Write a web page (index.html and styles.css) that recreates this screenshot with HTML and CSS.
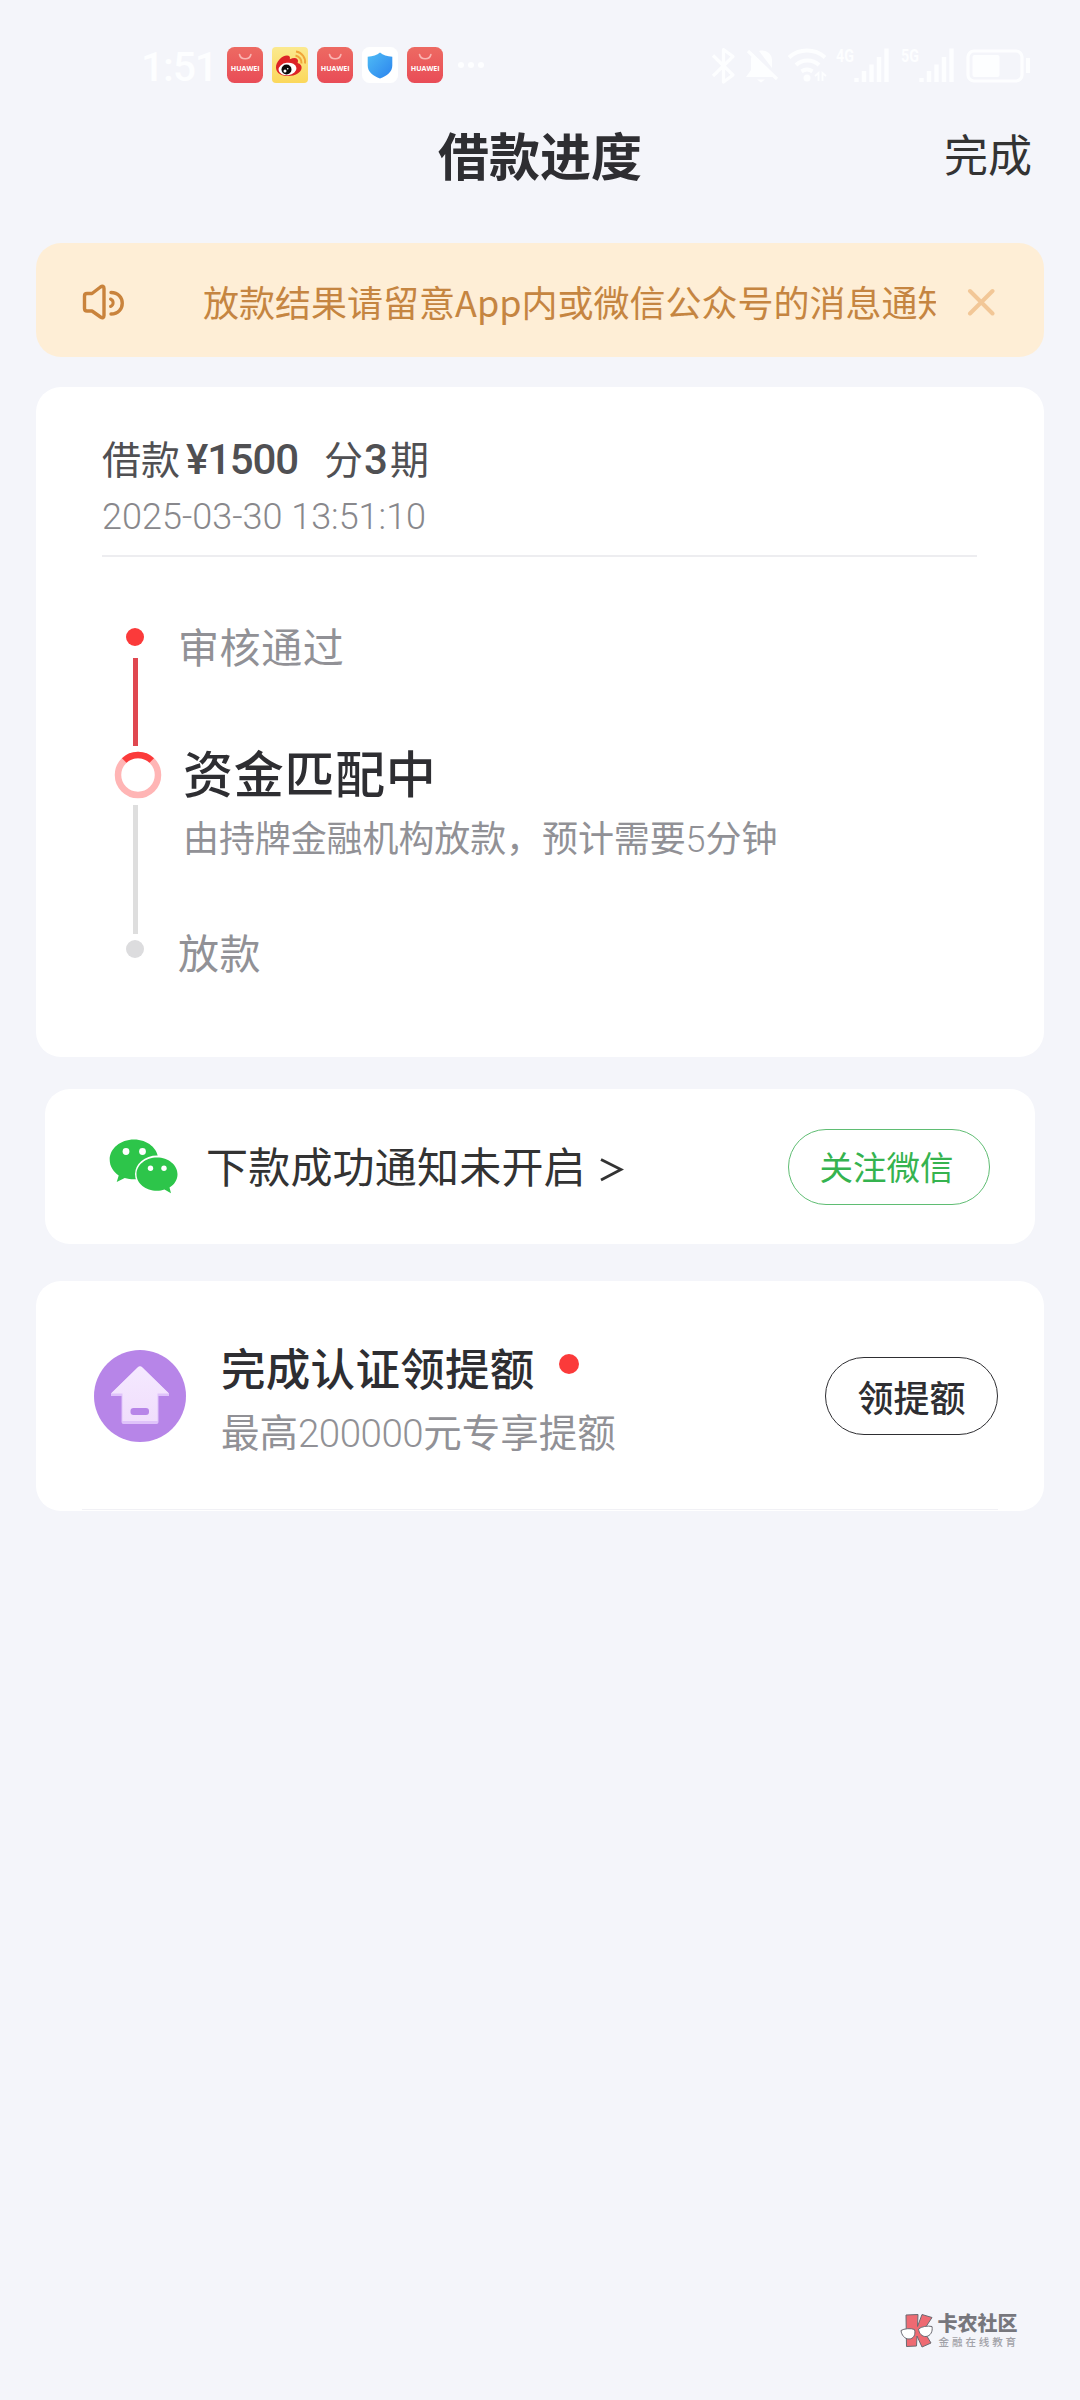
FILE: index.html
```
<!DOCTYPE html>
<html lang="zh-CN">
<head>
<meta charset="utf-8">
<title>借款进度</title>
<link rel="stylesheet" href="styles.css">
</head>
<body>
<svg class="defs" width="0" height="0">
  <defs>
    <linearGradient id="gRed" x1="0" y1="0" x2="0" y2="1"><stop offset="0" stop-color="#ed6a62"/><stop offset="1" stop-color="#e94c57"/></linearGradient>
    <linearGradient id="gShield" x1="0" y1="0" x2="1" y2="1"><stop offset="0" stop-color="#4fbcf5"/><stop offset="1" stop-color="#2b83ee"/></linearGradient>
    <linearGradient id="gYellow" x1="0" y1="0" x2="0" y2="1"><stop offset="0" stop-color="#fbe98f"/><stop offset="1" stop-color="#fbd75b"/></linearGradient>
    <linearGradient id="gHouse" x1="0" y1="0" x2="0" y2="1"><stop offset="0" stop-color="#f5e9ff"/><stop offset="1" stop-color="#f0defc"/></linearGradient>
    <symbol id="huawei" viewBox="0 0 36 36">
      <rect width="36" height="36" rx="7.5" fill="url(#gRed)"/>
      <path d="M12.5 7.5a5.8 5.2 0 0 0 11.4 0" fill="none" stroke="#f9b5b1" stroke-width="1.6" stroke-linecap="round"/>
      <text x="18.2" y="23.6" text-anchor="middle" textLength="29" lengthAdjust="spacingAndGlyphs" class="huawei-word">HUAWEI</text>
    </symbol>
  </defs>
</svg>
<div class="screen">
  <div class="status">
    <span class="clock">1:51</span>
    <div class="notes">
      <svg width="36" height="36"><use href="#huawei"/></svg>
      <svg width="36" height="36" viewBox="0 0 36 36">
        <rect width="36" height="36" rx="4" fill="url(#gYellow)"/>
        <path d="M24 8.500a8 7.500 0 0 1 6 8M24.500 4.500a11 10.500 0 0 1 9 12" transform="translate(-.5 0)" fill="none" stroke="#f0a53a" stroke-width="2"/>
        <path d="M4 21C3.500 15 10 8.500 15 8.500c2.500 0 3.500 1.500 2.800 3.700 3.500-1.500 6.200-1.500 7.400-.2 1.300 1.200.8 3 .4 4 3 1 4.200 2.600 4 5-.4 4.600-6.600 8-13.300 8S4.500 26.500 4 21z" fill="#dd2327"/>
        <ellipse cx="15.500" cy="22" rx="9" ry="6.200" fill="#fff" transform="rotate(-7 15.500 22)"/>
        <circle cx="14.500" cy="22.500" r="5" fill="#0b0b0b"/><circle cx="13" cy="24" r="1.500" fill="#fff"/><circle cx="15.700" cy="21.800" r=".8" fill="#fff"/>
      </svg>
      <svg width="36" height="36"><use href="#huawei"/></svg>
      <svg width="36" height="36" viewBox="0 0 36 36">
        <rect width="36" height="36" rx="7.500" fill="#fff"/>
        <path d="M18 5.500c3 2.500 7 4 12.300 4.300v8.700c0 6.500-5.500 10.500-12.300 13-6.800-2.500-12.300-6.500-12.300-13V9.800C11 9.500 15 8 18 5.500z" fill="url(#gShield)"/>
      </svg>
      <svg width="36" height="36"><use href="#huawei"/></svg>
    </div>
    <div class="more"><i></i><i></i><i></i></div>
    <svg class="system" width="324" height="40" viewBox="708 46 324 40" fill="none" stroke="#fdfeff" stroke-width="3.200">
      <path d="M713 55.500l20 19.500-9.500 7V49.500l9.500 7-20 19.500" stroke-linejoin="round"/>
      <path d="M751 58v12l-5 7h28L753 54zM759 51l13 17V60c0-6-6-11-13-9z" fill="#fdfeff" stroke="none"/>
      <path d="M748 51l29 28"/><path d="M757 79.500h8l-4 3z" fill="#fdfeff" stroke="none"/>
      <path d="M789 57.500a27 27 0 0 1 36 0M796 65a17 17 0 0 1 23 0M801.500 71.500a9.500 9.500 0 0 1 11 0" stroke-width="4"/>
      <circle cx="807" cy="78" r="3.500" fill="#fdfeff" stroke="none"/>
      <path d="M815 76l3.500-3v8M826 76l-3.500-3v8" stroke-width="1.800"/>
      <path d="M856.500 82v-4M864 82v-11M871.500 82V64.500M879 82V57M886.500 82V48.500M921.500 82v-4M929 82v-11M936.500 82V64.500M944 82V57M951.500 82V48.500" stroke-width="4.400"/>
      <text x="836" y="62" textLength="18" lengthAdjust="spacingAndGlyphs" class="net">4G</text>
      <text x="901" y="62" textLength="18" lengthAdjust="spacingAndGlyphs" class="net">5G</text>
      <rect x="968" y="51" width="54" height="30" rx="6"/>
      <rect x="972.500" y="55" width="27" height="22" rx="2" fill="#fdfeff" stroke="none"/>
      <path d="M1028 58v15" stroke-width="4"/>
    </svg>
  </div>

  <header class="nav">
    <h1 class="nav-title">借款进度</h1>
    <a class="nav-done">完成</a>
  </header>

  <section class="notice">
    <svg class="speaker" width="46" height="40" viewBox="80 283 46 40" fill="none" stroke="#c9833c" stroke-width="3.400" stroke-linecap="round" stroke-linejoin="round">
      <path d="M86 294.500h5l8.500-6.500c2-1.300 3.500-.7 3.500 1.500v27c0 2.200-1.500 2.800-3.500 1.500L91 312h-5c-1.800 0-2.500-.8-2.500-2.500v-12.500c0-1.700.7-2.500 2.500-2.500z"/>
      <path d="M110 293.500c15 0 15 21.500 0 21.500"/><path d="M109.500 300c3.500 1.500 3.500 6 0 7.500" stroke-width="3"/>
    </svg>
    <p class="notice-text">放款结果请留意App内或微信公众号的消息通知</p>
    <svg class="close" width="28" height="28" viewBox="0 0 28 28" stroke="#f2c797" stroke-width="4" stroke-linecap="round"><path d="M3 3l22.500 22.500M25.500 3L3 25.500"/></svg>
  </section>

  <section class="card loan">
    <div class="loan-head">
      <p class="amount"><span>借款</span><b class="yen">¥1500</b><span>分</span><b class="terms">3</b><span>期</span></p>
      <p class="date">2025-03-30 13:51:10</p>
    </div>
    <div class="steps">
      <div class="rail">
        <i class="dot"></i><i class="line line-done"></i>
        <svg class="ring" width="48" height="48" viewBox="-24 -24 48 48" fill="none" stroke-width="6.500">
          <circle r="20" stroke="#ffb5b5"/><path d="M-13.800 -14.500A20 20 0 0 1 13.800 -14.500" stroke="#fb3a3a"/>
        </svg>
        <i class="line line-wait"></i><i class="dot dot-wait"></i>
      </div>
      <div class="step-texts">
        <p class="step">审核通过</p>
        <p class="step-now">资金匹配中</p>
        <p class="step-sub">由持牌金融机构放款，预计需要<span class="num">5</span>分钟</p>
        <p class="step step-last">放款</p>
      </div>
    </div>
  </section>

  <section class="card wechat">
    <svg width="69" height="57" viewBox="109 1138 69 57">
      <path d="M134 1139.500c-13.500 0-24.300 9-24.300 20.300 0 6.400 3.500 12 9 15.700l-2 6.500 8-4c3 .9 6 1.300 9.300 1.300 13.400 0 24.300-8.800 24.300-19.500 0-11.300-10.900-20.300-24.300-20.300z" fill="#2dc54a"/>
      <ellipse cx="157" cy="1174" rx="22" ry="18.500" fill="#fff"/>
      <path d="M157 1157.500c-11.300 0-20.500 7.500-20.500 16.700s9.200 16.600 20.500 16.600c2.800 0 5-.3 7.500-1.200l6.500 3.600-1.500-5.700c5-3.200 8-7.800 8-13.300 0-9.200-9.200-16.700-20.500-16.700z" fill="#2dc54a"/>
      <g fill="#fff"><circle cx="126" cy="1151.500" r="3.400"/><circle cx="142.500" cy="1151.500" r="3.400"/><circle cx="150.500" cy="1168.300" r="2.700"/><circle cx="164" cy="1168.300" r="2.700"/></g>
    </svg>
    <p class="wechat-text">下款成功通知未开启</p>
    <svg class="arrow" width="24" height="26" viewBox="0 0 24 26" fill="none" stroke="#333" stroke-width="2.800"><path d="M1 2.500L21 12.500 1 23"/></svg>
    <button class="pill pill-green">关注微信</button>
  </section>

  <section class="card quota">
    <div class="quota-row">
      <svg width="92" height="92" viewBox="0 0 92 92">
        <circle cx="46" cy="46" r="46" fill="#b785e8"/>
        <path d="M43.500 18q2.500-2.500 5 0L75 43.500V46H64.500v26q0 2-2 2h-33q-2 0-2-2V46H17V43.500z" fill="#dfc3fa"/>
        <path d="M43.500 17.500q2.500-2.500 5 0L75 43.500H63.500V71h-35V43.500H17z" fill="url(#gHouse)"/>
        <rect x="36.500" y="58" width="18.500" height="7" rx="3" fill="#b785e8"/>
      </svg>
      <div class="quota-main">
        <p class="quota-title">完成认证领提额<i class="badge"></i></p>
        <p class="quota-sub">最高<span class="num">200000</span>元专享提额</p>
      </div>
      <button class="pill pill-dark">领提额</button>
    </div>
  </section>

  <footer class="brand">
    <svg width="34" height="36" viewBox="0 0 34 36" stroke="#6a6a72" stroke-width="1">
      <path d="M6 2l12-.5-.5 12L22 1.500l10 3-8.500 13L31 30l-9 4-5-11-.5 10-10 .5z" fill="#ee6a72"/>
      <path d="M1 17.500c3-2 10-2.500 13.500-1 1.500 5-1 9.500-5.500 9.500s-7.500-4-8-8.500zM18.500 16c3-2.500 9-3.500 13.500-2.500 1 5-1.500 9.500-6 10-4 .3-7-3-7.500-7.500z" fill="#fff"/>
    </svg>
    <div>
      <p class="brand-name">卡农社区</p>
      <p class="brand-sub">金融在线教育</p>
    </div>
  </footer>
</div>
</body>
</html>
```
FILE: styles.css
```
* { box-sizing: border-box; }
body { margin: 0; background: #f4f5fa; font-family: "Noto Sans CJK SC", sans-serif; color: #2e2e32; }
p, h1 { margin: 0; font-weight: 400; white-space: nowrap; }
svg { display: block; flex: none; }
i { display: block; flex: none; }
.defs { position: absolute; }
.screen { width: 1080px; height: 2400px; display: flex; flex-direction: column; overflow: hidden; }

.status { height: 106px; padding: 24px 48px 0 141px; display: flex; align-items: center; flex: none; }
.clock { width: 86px; font: 500 41px/42px Roboto, sans-serif; letter-spacing: -1.200px; color: #fdfeff; margin-top: 4px; }
.notes { display: flex; gap: 9px; }
.more { display: flex; gap: 4px; margin-left: 15px; }
.more i { width: 6px; height: 6px; border-radius: 3px; background: #fdfeff; }
.system { margin: 2px 0 0 auto; }
.huawei-word { font: 700 6.500px "Open Sans", sans-serif; fill: #fff; }
.net { font: 700 18px Roboto, sans-serif; fill: #fdfeff; stroke: none; }

.nav { height: 137px; padding: 20px 48px 0 436px; display: flex; justify-content: space-between; align-items: flex-start; flex: none; }
.nav-title { font-size: 51px; line-height: 56px; font-weight: 700; margin-left: 2px; }
.nav-done { font-size: 44px; line-height: 50px; color: #333; margin: 2px 0 0 0; }

.notice { height: 114px; margin: 0 36px; padding: 4px 48px 0 45px; border-radius: 25px; background: #feeed6; display: flex; align-items: center; flex: none; }
.notice-text { width: 733px; margin: -3px 0 0 76px; overflow: hidden; font-size: 36px; line-height: 56px; color: #c58541; }
.close { margin: -1px 0 0 31px; }

.card { background: #fff; border-radius: 25px; flex: none; }
.loan { height: 670px; margin: 30px 36px 0; padding: 0 67px 0 66px; }
.loan-head { height: 170px; padding-top: 45px; border-bottom: 2px solid #ededf0; }
.amount { display: flex; font-size: 39px; line-height: 50px; color: #505053; }
.amount b { font: 500 42px/50px Roboto, sans-serif; letter-spacing: -1.200px; padding-top: 3px; }
.yen { margin-left: 6px; width: 138px; }
.terms { margin: 0 3px 0 1px; width: 23px; }
.date { font: 350 36px/44px Roboto, sans-serif; color: #88888c; margin-top: 10px; }
.num { font-family: Roboto, sans-serif; font-weight: 350; }

.steps { display: flex; padding: 71px 0 0 12px; }
.rail { width: 48px; display: flex; flex-direction: column; align-items: center; }
.dot { width: 18px; height: 18px; border-radius: 9px; background: #fb3a3a; margin-right: 6px; }
.dot-wait { background: #dcdcde; margin-top: 6px; }
.line { width: 5px; margin-right: 6px; }
.line-done { height: 88px; margin-top: 12px; background: #e04850; }
.ring { margin-top: 5px; }
.line-wait { height: 129px; margin-top: 6px; background: #dedede; }
.step-texts { padding-left: 16px; }
.step { font-size: 41px; line-height: 50px; letter-spacing: .6px; color: #919196; margin-top: -8px; }
.step-now { font-size: 50px; line-height: 60px; font-weight: 500; letter-spacing: .7px; margin: 71px 0 0 5px; }
.step-sub { font-size: 36px; line-height: 50px; letter-spacing: -.1px; color: #919196; margin: 10px 0 0 5px; }
.step-last { margin-top: 61px; }

.wechat { height: 155px; margin: 32px 45px 0 45px; padding: 0 45px 0 64px; display: flex; align-items: center; }
.wechat-text { font-size: 42px; line-height: 60px; letter-spacing: .2px; color: #333; margin: -4px 0 0 28px; }
.arrow { margin: 6px 0 0 14px; }
.pill { margin-left: auto; border-radius: 40px; background: none; font-family: inherit; white-space: nowrap; padding: 0; }
.pill-green { width: 202px; height: 76px; border: 1.500px solid #5fbd73; color: #35b34f; font-size: 33.500px; padding: 0 5px 2px 0; }
.pill-dark { width: 173px; height: 78px; border: 1.500px solid #2e2e32; color: #2e2e32; font-size: 36px; font-weight: 500; }

.quota { height: 230px; margin: 37px 36px 0; padding: 0 46px; }
.quota-row { height: 229px; padding: 2px 0 0 12px; border-bottom: 1px solid #f1f1f5; display: flex; align-items: center; }
.quota-main { margin: 6px 0 0 35px; }
.quota-title { display: flex; font-size: 44.500px; line-height: 60px; letter-spacing: .3px; font-weight: 500; }
.badge { width: 20px; height: 20px; border-radius: 10px; background: #fb3a3a; margin: 17px 0 0 24px; }
.quota-sub { font-size: 38.500px; line-height: 54px; color: #919196; margin-top: 6px; }
.quota-sub .num { letter-spacing: -.5px; }

.brand { margin: auto 61px 50px auto; display: flex; gap: 4px; align-items: center; }
.brand-name { font-size: 20px; line-height: 22px; font-weight: 900; color: #77777d; }
.brand-sub { font-size: 10.500px; line-height: 16px; letter-spacing: 2.900px; font-weight: 500; color: #a2a2a8; padding-left: 1px; }
```
